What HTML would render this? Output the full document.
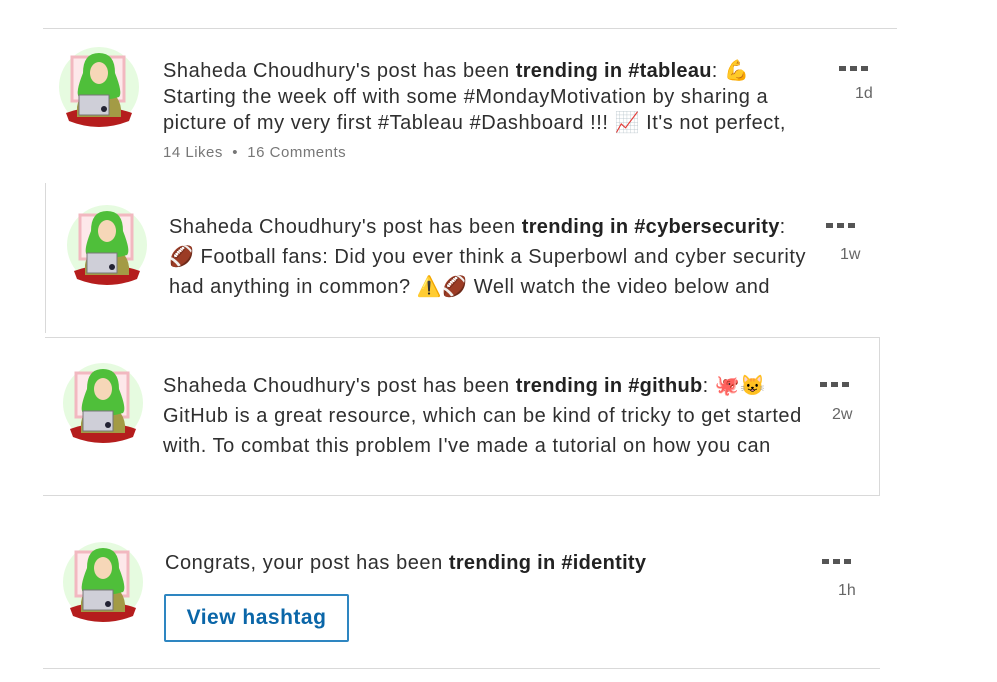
<!DOCTYPE html>
<html><head><meta charset="utf-8"><style>
body{margin:0;width:997px;height:682px;background:#fff;position:relative;overflow:hidden;font-family:"Liberation Sans",sans-serif;color:#2f2f2f}
.a{position:absolute}
.l{position:absolute;white-space:nowrap;font-size:20px;letter-spacing:0.55px;line-height:30px}
.hr{position:absolute;height:1px;background:#d9d9d9}
.vr{position:absolute;width:1px;background:#d9d9d9}
.dots{position:absolute;font-size:0}
.dots i{display:inline-block;width:7px;height:5px;background:#555;margin-right:4px}
.t{position:absolute;font-size:16px;color:#666}
b{font-weight:bold;color:#222;letter-spacing:0.3px}
</style></head><body>
<svg width="0" height="0" style="position:absolute"><defs>
<g id="av">
<circle cx="0" cy="0" r="40" fill="#e6fbe0"/>
<rect x="-27" y="-30" width="52" height="44" fill="#fde8ea" stroke="#f2b8c0" stroke-width="3"/>
<path d="M-33 26 Q0 14 33 26 L30 34 Q0 46 -30 34Z" fill="#b51d1d"/>
<path d="M-22 20 Q-20 4 0 2 Q20 4 22 22 L22 30 L-22 30Z" fill="#a39b45"/>
<path d="M0 -34 Q-16 -34 -16 -14 Q-24 6 -20 10 Q0 16 20 10 Q24 6 16 -14 Q16 -34 0 -34Z" fill="#4fbf3a"/>
<ellipse cx="0" cy="-14" rx="9" ry="11" fill="#f6d7b8"/>
<rect x="-20" y="8" width="30" height="20" fill="#cfcfd8" stroke="#777" stroke-width="1"/>
<circle cx="5" cy="22" r="3" fill="#223"/>
</g></defs></svg>

<div class="hr" style="left:43px;top:28px;width:854px"></div>
<svg class="a" style="left:59px;top:47px" width="80" height="80"><use href="#av" x="40" y="40"/></svg>
<div class="l" style="left:163px;top:56px">Shaheda Choudhury's post has been <b>trending in #tableau</b>: 💪</div>
<div class="l" style="left:163px;top:82px">Starting the week off with some #MondayMotivation by sharing a</div>
<div class="l" style="left:163px;top:108px">picture of my very first #Tableau #Dashboard !!! 📈 It's not perfect,</div>
<div class="a" style="left:163px;top:144px;font-size:15px;letter-spacing:0.5px;color:#777">14 Likes &nbsp;•&nbsp; 16 Comments</div>
<div class="dots" style="left:839px;top:66px"><i></i><i></i><i></i></div>
<div class="t" style="left:855px;top:85px">1d</div>

<div class="vr" style="left:45px;top:183px;height:150px"></div>
<svg class="a" style="left:67px;top:205px" width="80" height="80"><use href="#av" x="40" y="40"/></svg>
<div class="l" style="left:169px;top:212px">Shaheda Choudhury's post has been <b>trending in #cybersecurity</b>:</div>
<div class="l" style="left:169px;top:242px">🏈 Football fans: Did you ever think a Superbowl and cyber security</div>
<div class="l" style="left:169px;top:272px">had anything in common? ⚠️🏈 Well watch the video below and</div>
<div class="dots" style="left:826px;top:223px"><i></i><i></i><i></i></div>
<div class="t" style="left:840px;top:246px">1w</div>

<div class="hr" style="left:45px;top:337px;width:835px"></div>
<div class="vr" style="left:879px;top:337px;height:158px"></div>
<svg class="a" style="left:63px;top:363px" width="80" height="80"><use href="#av" x="40" y="40"/></svg>
<div class="l" style="left:163px;top:371px">Shaheda Choudhury's post has been <b>trending in #github</b>: 🐙😺</div>
<div class="l" style="left:163px;top:401px">GitHub is a great resource, which can be kind of tricky to get started</div>
<div class="l" style="left:163px;top:431px">with. To combat this problem I've made a tutorial on how you can</div>
<div class="dots" style="left:820px;top:382px"><i></i><i></i><i></i></div>
<div class="t" style="left:832px;top:406px">2w</div>

<div class="hr" style="left:43px;top:495px;width:837px"></div>
<svg class="a" style="left:63px;top:542px" width="80" height="80"><use href="#av" x="40" y="40"/></svg>
<div class="l" style="left:165px;top:548px">Congrats, your post has been <b>trending in #identity</b></div>
<div class="a" style="left:164px;top:594px;width:181px;height:44px;border:2px solid #2e86c1;border-radius:2px;color:#0a66a8;font-size:21px;font-weight:bold;line-height:44px;text-align:center;letter-spacing:0.5px">View hashtag</div>
<div class="dots" style="left:822px;top:559px"><i></i><i></i><i></i></div>
<div class="t" style="left:838px;top:582px">1h</div>

<div class="hr" style="left:43px;top:668px;width:837px"></div>
</body></html>
